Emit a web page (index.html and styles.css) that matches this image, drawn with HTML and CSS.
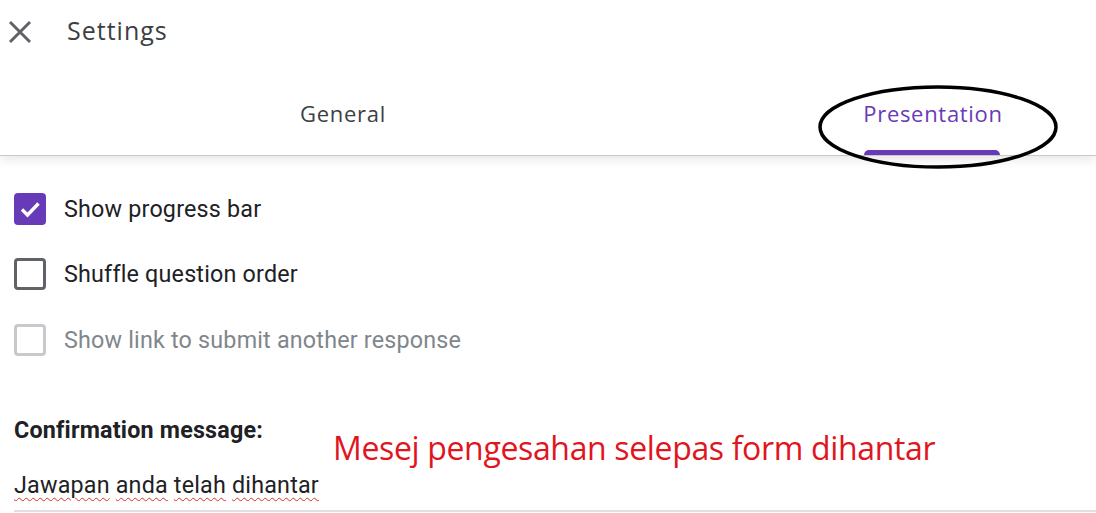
FILE: index.html
```html
<!DOCTYPE html>
<html>
<head>
<meta charset="utf-8">
<link rel="stylesheet" href="styles.css">
</head>
<body>
<div class="page">
  <header class="header">
    <div class="topbar">
      <svg class="close" width="24" height="24" viewBox="0 0 24 24"><path d="M2 2 L22 22 M22 2 L2 22" stroke="#5f6368" stroke-width="3" fill="none"/></svg>
      <div class="title">Settings</div>
    </div>
    <div class="tabs">
      <div class="tab">General</div>
      <div class="tab active"><span class="tab-label">Presentation<span class="indicator"></span></span></div>
    </div>
  </header>
  <main class="content">
    <div class="row">
      <span class="box checked"><svg width="32" height="32" viewBox="0 0 32 32"><path d="M8 16.5 L13.5 22 L24.5 10.5" stroke="#fff" stroke-width="3.4" fill="none"/></svg></span>
      <span class="label">Show progress bar</span>
    </div>
    <div class="row">
      <span class="box"></span>
      <span class="label">Shuffle question order</span>
    </div>
    <div class="row disabled">
      <span class="box"></span>
      <span class="label">Show link to submit another response</span>
    </div>
    <div class="confirm-label">Confirmation message:</div>
    <div class="confirm-field"><span class="sp">Jawapan</span> <span class="sp">anda</span> <span class="sp">telah</span> <span class="sp">dihantar</span></div>
  </main>
  <div class="note">Mesej pengesahan selepas form dihantar</div>
  <svg class="ellipse" width="244" height="88" viewBox="0 0 244 88"><ellipse cx="122" cy="44" rx="118" ry="40" stroke="#000" stroke-width="3.5" fill="none"/></svg>
</div>
</body>
</html>
```

FILE: styles.css
```css
html, body { margin: 0; padding: 0; background: #fff; }
body { width: 1096px; height: 513px; overflow: hidden; }
.page { position: relative; width: 1096px; height: 513px; overflow: hidden; }

.header {
  height: 156px;
  border-bottom: 1px solid #c8c8c8;
  box-sizing: border-box;
  box-shadow: 0 2px 12px rgba(0,0,0,0.12);
  position: relative;
  z-index: 1;
  background: #fff;
}
.topbar { height: 62px; display: flex; align-items: center; }
.close { margin-left: 8px; margin-top: 1px; }
.title {
  margin-left: 35px;
  font-family: "Open Sans", sans-serif;
  font-size: 25px;
  color: #3c4043;
  letter-spacing: 1px;
  margin-top: -3px;
}
.tabs { display: flex; padding-left: 48px; height: 93px; }
.tab {
  flex: 0 0 590px;
  display: flex; align-items: center; justify-content: center;
  font-family: "Open Sans", sans-serif;
  font-size: 22px;
  color: #3c4043;
  letter-spacing: 0.7px;
  padding-top: 20px;
  padding-bottom: 12px;
  box-sizing: border-box;
  position: relative;
}
.tab.active { color: #673ab7; }
.tab-label { position: relative; }
.indicator {
  position: absolute;
  left: 1px; right: 3px;
  bottom: -27px;
  height: 5px;
  background: #673ab7;
  border-radius: 5px 5px 0 0;
}

.content { padding: 20px 0 0 14px; font-family: Roboto, sans-serif; }
.row { height: 65.5px; display: flex; align-items: center; }
.box {
  width: 32px; height: 32px;
  box-sizing: border-box;
  border: 3px solid #5f6368;
  border-radius: 4px;
  display: flex; align-items: center; justify-content: center;
}
.box.checked { background: #673ab7; border: none; }
.label { margin-left: 18px; font-size: 23.3px; color: #202124; letter-spacing: 0.2px; }
.disabled .box { border-color: #c7c9cc; }
.disabled .label { color: #80868b; }

.confirm-label {
  margin-top: 43px;
  font-size: 23.3px; font-weight: bold; color: #202124;
  letter-spacing: 0.2px;
}
.confirm-field {
  margin-top: 27px;
  font-size: 23.3px; color: #202124;
  padding-bottom: 11px;
  border-bottom: 2px solid #e0e0e0;
  letter-spacing: 0.2px;
}
.sp {
  text-decoration: underline wavy #d93025;
  text-decoration-thickness: 1px;
  text-underline-offset: 4px;
}

.note {
  position: absolute;
  left: 333px; top: 426px;
  font-family: "Open Sans", sans-serif;
  font-size: 32px;
  color: #e0151e;
  letter-spacing: -0.35px;
}
.ellipse { position: absolute; left: 816px; top: 83px; z-index: 2; }
```
